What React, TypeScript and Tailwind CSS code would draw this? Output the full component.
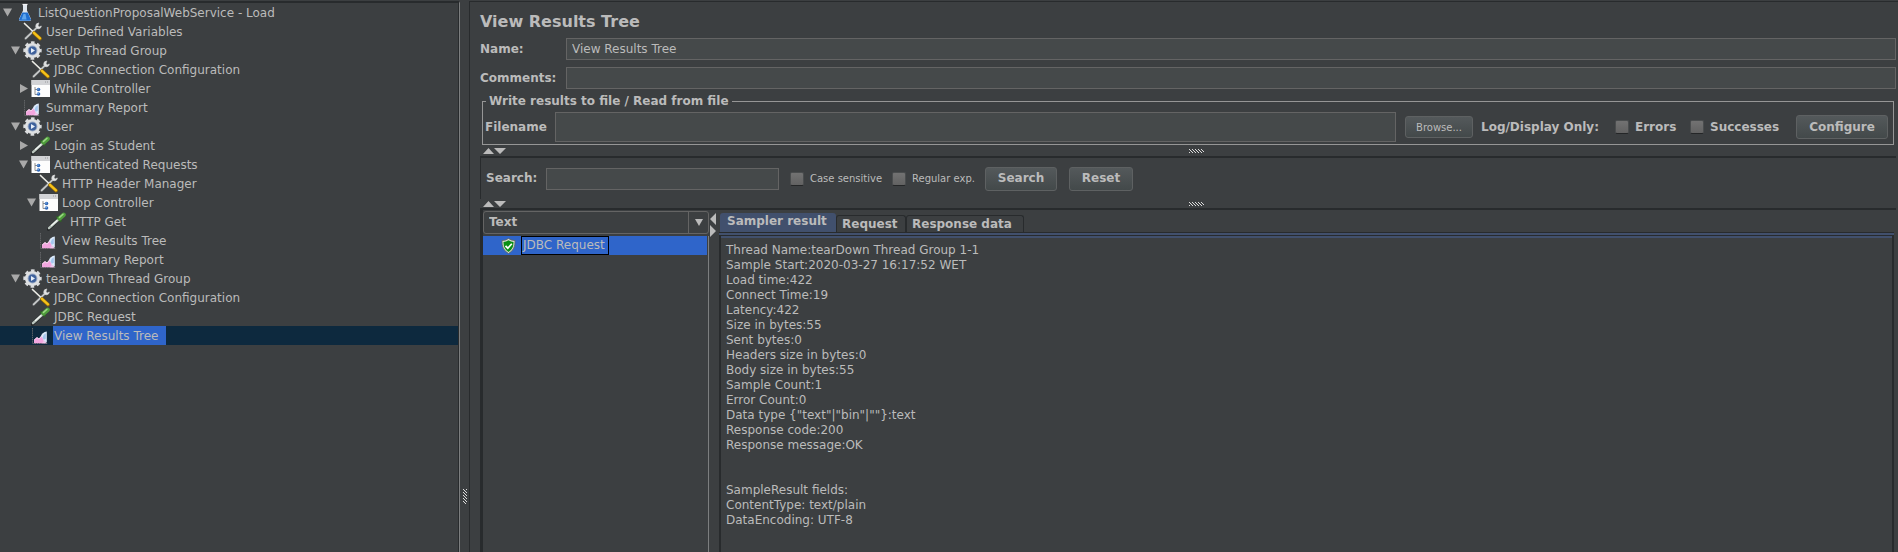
import React, { useState } from 'react';

type IconName = 'flask' | 'tools' | 'gear' | 'controller' | 'report' | 'dropper';

interface TreeNode {
  label: string;
  icon: IconName;
  indent: string;
  state?: 'open' | 'closed';
  selected?: boolean;
}

const L0 = 'pl-[3px]';
const L1 = 'pl-[11px]';
const L2 = 'pl-[19px]';
const L3 = 'pl-[27px]';
const L4 = 'pl-[35px]';

const nodes: TreeNode[] = [
  { label: 'ListQuestionProposalWebService - Load', icon: 'flask', indent: L0, state: 'open' },
  { label: 'User Defined Variables', icon: 'tools', indent: L1 },
  { label: 'setUp Thread Group', icon: 'gear', indent: L1, state: 'open' },
  { label: 'JDBC Connection Configuration', icon: 'tools', indent: L2 },
  { label: 'While Controller', icon: 'controller', indent: L2, state: 'closed' },
  { label: 'Summary Report', icon: 'report', indent: L1 },
  { label: 'User', icon: 'gear', indent: L1, state: 'open' },
  { label: 'Login as Student', icon: 'dropper', indent: L2, state: 'closed' },
  { label: 'Authenticated Requests', icon: 'controller', indent: L2, state: 'open' },
  { label: 'HTTP Header Manager', icon: 'tools', indent: L3 },
  { label: 'Loop Controller', icon: 'controller', indent: L3, state: 'open' },
  { label: 'HTTP Get', icon: 'dropper', indent: L4 },
  { label: 'View Results Tree', icon: 'report', indent: L3 },
  { label: 'Summary Report', icon: 'report', indent: L3 },
  { label: 'tearDown Thread Group', icon: 'gear', indent: L1, state: 'open' },
  { label: 'JDBC Connection Configuration', icon: 'tools', indent: L2 },
  { label: 'JDBC Request', icon: 'dropper', indent: L2 },
  { label: 'View Results Tree', icon: 'report', indent: L2, selected: true },
];

const resultText = `Thread Name:tearDown Thread Group 1-1
Sample Start:2020-03-27 16:17:52 WET
Load time:422
Connect Time:19
Latency:422
Size in bytes:55
Sent bytes:0
Headers size in bytes:0
Body size in bytes:55
Sample Count:1
Error Count:0
Data type {"text"|"bin"|""}:text
Response code:200
Response message:OK


SampleResult fields:
ContentType: text/plain
DataEncoding: UTF-8`;

function NodeIcon({ name }: { name: IconName }) {
  return (
    <svg className="h-[19px] w-5 shrink-0" viewBox="0 0 20 19" aria-hidden="true">
      {name === 'flask' && (
        <g>
          <path d="M8 1.500h4v6l4 8.500q.5 2-1.500 2H5.500q-2 0-1.500-2L8 7.500z" fill="#dfe6ee" />
          <path d="M7.300 9.500h5.400l3.100 6.800q.3 1.400-1.200 1.400H5.400q-1.500 0-1.200-1.400z" fill="#1f6fd0" />
          <path d="M8.500 11h2l1 5.500H6.500z" fill="#5fa6ee" />
          <path d="M7.500 1.500h5" stroke="#f4f6f8" strokeWidth="1.200" />
        </g>
      )}
      {name === 'tools' && (
        <g fill="none" strokeLinecap="round">
          <path d="M2.500 16.500L14 5.500" stroke="#5b5e60" strokeWidth="3" />
          <path d="M2.700 16.300L14 5.500" stroke="#c9cccc" strokeWidth="1.700" />
          <path d="M15.500 1q-3 .3-2.700 3.500.5 2.500 3 2.200 2.200-.2 2.500-2.700l-2 .9-1.200-1.200z" fill="#e2e4e4" stroke="#d0d2d2" strokeWidth=".8" />
          <path d="M1.500 1.500L10 9.500" stroke="#ecece6" strokeWidth="1.700" />
          <path d="M11 11l6 5.500" stroke="#9a6c00" strokeWidth="3.600" />
          <path d="M11 10.800l6 5.500" stroke="#f5c21a" strokeWidth="2.300" />
        </g>
      )}
      {name === 'gear' && (
        <g>
          <circle cx="9.500" cy="9.500" r="8" fill="none" stroke="#d9dbdd" strokeWidth="2.400" strokeDasharray="3.600 2.683" strokeDashoffset="1.800" />
          <circle cx="9.500" cy="9.500" r="7.600" fill="#dfe1e3" />
          <circle cx="9.500" cy="9.500" r="4.900" fill="#9aaac4" />
          <circle cx="9.500" cy="9.500" r="3.900" fill="#3e619c" />
          <path d="M8 7l4 2.500L8 12z" fill="#e8f0fb" />
        </g>
      )}
      {name === 'controller' && (
        <g>
          <rect x=".5" y="1" width="18.500" height="17" fill="#fdfdfd" />
          <rect x=".5" y="1" width="18.500" height="5" fill="#d2d3d6" />
          <path d="M14 3h1M16 3h1" stroke="#96979a" />
          <path d="M4 8v7.500h2M4 10.500h2" fill="none" stroke="#777" strokeWidth=".8" />
          <circle cx="7.500" cy="10.500" r="1.800" fill="#2c66b8" />
          <circle cx="7.500" cy="15" r="1.800" fill="#2c66b8" />
          <circle cx="7" cy="10" r=".7" fill="#a7caf2" />
          <circle cx="7" cy="14.500" r=".7" fill="#a7caf2" />
        </g>
      )}
      {name === 'report' && (
        <g>
          <path d="M1.500 2v15.500h15.500" fill="none" stroke="#66696b" strokeWidth=".9" strokeDasharray="1.500 .7" />
          <path d="M9.500 11Q11 6 15.800 5.500v11L12 15z" fill="#dceafa" />
          <path d="M11.500 11.500q1-3.500 3.300-4.300v5.500l-2 1z" fill="#a3c6ee" />
          <path d="M3 17.300v-3.500l3-2.500 2 1.500 2-2.500 2 2.500 1 3 2 1.500z" fill="#f3a6df" />
          <path d="M3.200 14l2.800-2.500 2 1.500 2-2.300" fill="none" stroke="#fde3f6" strokeWidth=".9" />
          <path d="M11 17.300l2-3 2.800 3z" fill="#f0c8ec" />
        </g>
      )}
      {name === 'dropper' && (
        <g fill="none" strokeLinecap="round">
          <path d="M1.500 17L11 8" stroke="#202324" strokeWidth="3.400" />
          <path d="M2 16.200L11.500 7.500" stroke="#b9c4bd" strokeWidth="2.500" />
          <path d="M4.500 13.500l5.500-5" stroke="#f5f8f6" strokeWidth="1.100" />
          <path d="M10 5l3.800 4" stroke="#2f5e27" strokeWidth="2" />
          <path d="M12.600 6.400l4-3.600" stroke="#4f9d3c" strokeWidth="4.400" />
          <path d="M12.500 5.400l3.500-3.200" stroke="#9cd785" strokeWidth="1.500" />
        </g>
      )}
    </svg>
  );
}

function Toggle({ state }: { state?: 'open' | 'closed' }) {
  return (
    <svg className="mr-[3px] h-[9px] w-[9px] shrink-0" viewBox="0 0 9 9" aria-hidden="true">
      {state === 'open' && <path d="M0 .5h9l-4.500 8z" fill="#a9a9a9" />}
      {state === 'closed' && <path d="M1 0l8 4.500-8 4.500z" fill="#a9a9a9" />}
    </svg>
  );
}

function Grip({ id, className }: { id: string; className: string }) {
  return (
    <svg className={className} shapeRendering="crispEdges" aria-hidden="true">
      <defs>
        <pattern id={id} width="3" height="3" patternUnits="userSpaceOnUse">
          <path d="M0 0h1v1H0zM1 1h1v1H1zM2 2h1v1H2z" fill="#dcdcdc" />
        </pattern>
      </defs>
      <rect width="100%" height="100%" fill={`url(#${id})`} />
    </svg>
  );
}

function SplitBar({ id, className }: { id: string; className: string }) {
  return (
    <div className={`grid grid-cols-[1fr_auto_1fr] items-center pl-[3px] ${className}`}>
      <svg className="h-[6px] w-6" viewBox="0 0 24 6" aria-hidden="true">
        <path d="M0 6L5.500 0 11 6zM11 0h12l-6 6z" fill="#bbb" />
      </svg>
      <Grip id={id} className="ml-[14px] h-1 w-[15px]" />
      <span />
    </div>
  );
}

function Check({ id, label, small }: { id: string; label: string; small?: boolean }) {
  return (
    <span className="flex items-center gap-[6px]">
      <input
        id={id}
        type="checkbox"
        className="h-[14px] w-[14px] appearance-none rounded-[2px] border border-[#4a4d4e] border-b-[#242627] bg-linear-to-b from-[#727272] to-[#626262] checked:from-[#2f65ca] checked:to-[#2f65ca]"
      />
      <label htmlFor={id} className={small ? 'text-[10px]' : 'font-bold'}>{label}</label>
    </span>
  );
}

const field = 'min-w-0 border border-[#646464] bg-[#45494a] px-[5px] outline-none';
const button = 'rounded-[3px] border border-[#5e6162] bg-linear-to-b from-[#54595b] to-[#43494a]';

export default function App() {
  const [name, setName] = useState('View Results Tree');
  return (
    <div className="flex min-h-screen bg-[#3c3f41] font-['DejaVu_Sans',sans-serif] text-[12px] leading-[15px] text-[#bbbbbb]">
      <nav aria-label="Test plan" className="mt-px w-[460px] shrink-0 border-t-2 border-r border-t-[#282b2d] border-r-[#7c7e7f]">
        <ul className="min-h-full border-r border-[#282b2d]">
          {nodes.map((n, i) => (
            <li key={i} className={`flex h-[19px] items-center ${n.indent} ${n.selected ? 'bg-[#0d293e]' : ''}`}>
              <Toggle state={n.state} />
              <NodeIcon name={n.icon} />
              <span className={`ml-[2px] h-[19px] px-px pt-px leading-[18px] whitespace-nowrap ${n.selected ? 'bg-[#2f65ca] pr-2' : ''}`}>{n.label}</span>
            </li>
          ))}
        </ul>
      </nav>

      <div className="flex w-[9px] shrink-0 justify-center pt-[489px]">
        <Grip id="grip-main" className="h-[15px] w-1" />
      </div>

      <main className="mt-px flex min-w-0 grow flex-col border-t border-l border-[#282b2d] pr-[2px] pl-[10px]">
        <h1 className="mt-[10px] text-[16px] leading-5 font-bold">View Results Tree</h1>
        <div className="mt-[6px] grid grid-cols-[86px_1fr] items-center gap-y-[7px]">
          <label htmlFor="name" className="font-bold">Name:</label>
          <input id="name" className={`h-[22px] ${field}`} value={name} onChange={(e) => setName(e.target.value)} />
          <label htmlFor="comments" className="font-bold">Comments:</label>
          <input id="comments" className={`h-[22px] ${field}`} />
        </div>

        <fieldset className="mx-[2px] mt-[5px] border border-[#969696] pb-[2px]">
          <legend className="ml-[3px] px-[3px] font-bold">Write results to file / Read from file</legend>
          <div className="flex items-center pt-[3px] pr-[5px] pl-[2px]">
            <label htmlFor="filename" className="w-[70px] font-bold">Filename</label>
            <input id="filename" className={`h-[30px] grow ${field}`} />
            <button type="button" className={`ml-[9px] h-[22px] w-[68px] text-[10px] ${button}`}>Browse...</button>
            <span className="ml-2 w-[134px] font-bold">Log/Display Only:</span>
            <span className="w-[75px]"><Check id="errors" label="Errors" /></span>
            <span className="w-[106px]"><Check id="successes" label="Successes" /></span>
            <button type="button" className={`h-[24px] w-[92px] font-bold ${button}`}>Configure</button>
          </div>
        </fieldset>

        <SplitBar id="grip-top" className="h-[11px]" />

        <form className="flex h-[43px] items-center border-t-2 border-l border-[#282b2d] pl-[5px]" onSubmit={(e) => e.preventDefault()}>
          <label htmlFor="search" className="w-[60px] font-bold">Search:</label>
          <input id="search" className={`h-[22px] w-[233px] ${field}`} />
          <span className="ml-[11px] w-[102px]"><Check id="case" label="Case sensitive" small /></span>
          <span className="w-[93px]"><Check id="regex" label="Regular exp." small /></span>
          <button type="submit" className={`h-[24px] w-[72px] font-bold ${button}`}>Search</button>
          <button type="reset" className={`ml-3 h-[24px] w-[64px] font-bold ${button}`}>Reset</button>
        </form>

        <SplitBar id="grip-mid" className="h-[9px]" />

        <div className="flex grow border-t-2 border-l-3 border-[#282b2d]">
          <div className="flex w-[226px] shrink-0 flex-col pt-px">
            <div className="relative">
              <select aria-label="Renderer" className="block h-[23px] w-full appearance-none rounded-[3px] border border-[#646464] pl-[5px] font-bold outline-none">
                <option>Text</option>
              </select>
              <span className="pointer-events-none absolute inset-y-px right-0 flex w-[21px] items-center justify-center border-l border-[#646464]">
                <svg className="h-[7px] w-2" viewBox="0 0 8 7" aria-hidden="true"><path d="M0 0h8L4 7z" fill="#bbb" /></svg>
              </span>
            </div>
            <ul className="mt-[2px] grow border-r border-[#7c7e7f]">
              <li className="mr-px flex h-[19px] items-center bg-[#2f65ca] pl-[18px]">
                <svg className="mr-[5px] h-4 w-[15px]" viewBox="0 0 15 16" aria-hidden="true">
                  <path d="M7.500.5Q10 2.500 14 2.600q.6 9-6.500 12.900Q.4 11.600 1 2.600 5 2.500 7.500.5z" fill="#d9dcd6" stroke="#5c6658" strokeWidth=".8" />
                  <path d="M7.500 2.200Q10 3.800 12.500 3.900q.2 7-5 10-5.200-3-5-10Q5 3.800 7.500 2.200z" fill="#0a8f14" />
                  <path d="M4.500 7.800l2.300 2.400 4-4.400" fill="none" stroke="#fff" strokeWidth="1.700" />
                </svg>
                <span className="border border-black pr-[3px] pl-px leading-[17px]">JDBC Request</span>
              </li>
            </ul>
          </div>

          <svg className="mt-[3px] h-6 w-[10px] shrink-0" viewBox="0 0 10 24" aria-hidden="true">
            <path d="M7 0v12L1 6zM1 12l6 6-6 6z" fill="#bbb" />
          </svg>

          <section className="mr-[2px] flex min-w-0 grow flex-col pt-[3px]">
            <div role="tablist" className="flex items-end pl-px font-bold">
              <button type="button" role="tab" aria-selected="true" className="h-[19px] w-[116px] rounded-t-[3px] bg-[#41506d] pb-[2px] pl-[7px] text-left font-bold">Sampler result</button>
              <button type="button" role="tab" aria-selected="false" className="h-[17px] w-[70px] rounded-t-[3px] border border-b-0 border-[#282b2d] pl-[5px] text-left font-bold">Request</button>
              <button type="button" role="tab" aria-selected="false" className="h-[17px] w-[118px] rounded-t-[3px] border border-b-0 border-[#282b2d] pl-[5px] text-left font-bold">Response data</button>
            </div>
            <div className="h-[3px] border-t border-[#282b2d] bg-[#41506d]" />
            <div role="tabpanel" className="grow border-t border-r-2 border-l-2 border-[#282b2d]">
              <pre className="border-t-2 border-[#41506d] pt-[5px] pl-[5px] font-['DejaVu_Sans',sans-serif]">{resultText}</pre>
            </div>
          </section>
        </div>
      </main>
    </div>
  );
}
